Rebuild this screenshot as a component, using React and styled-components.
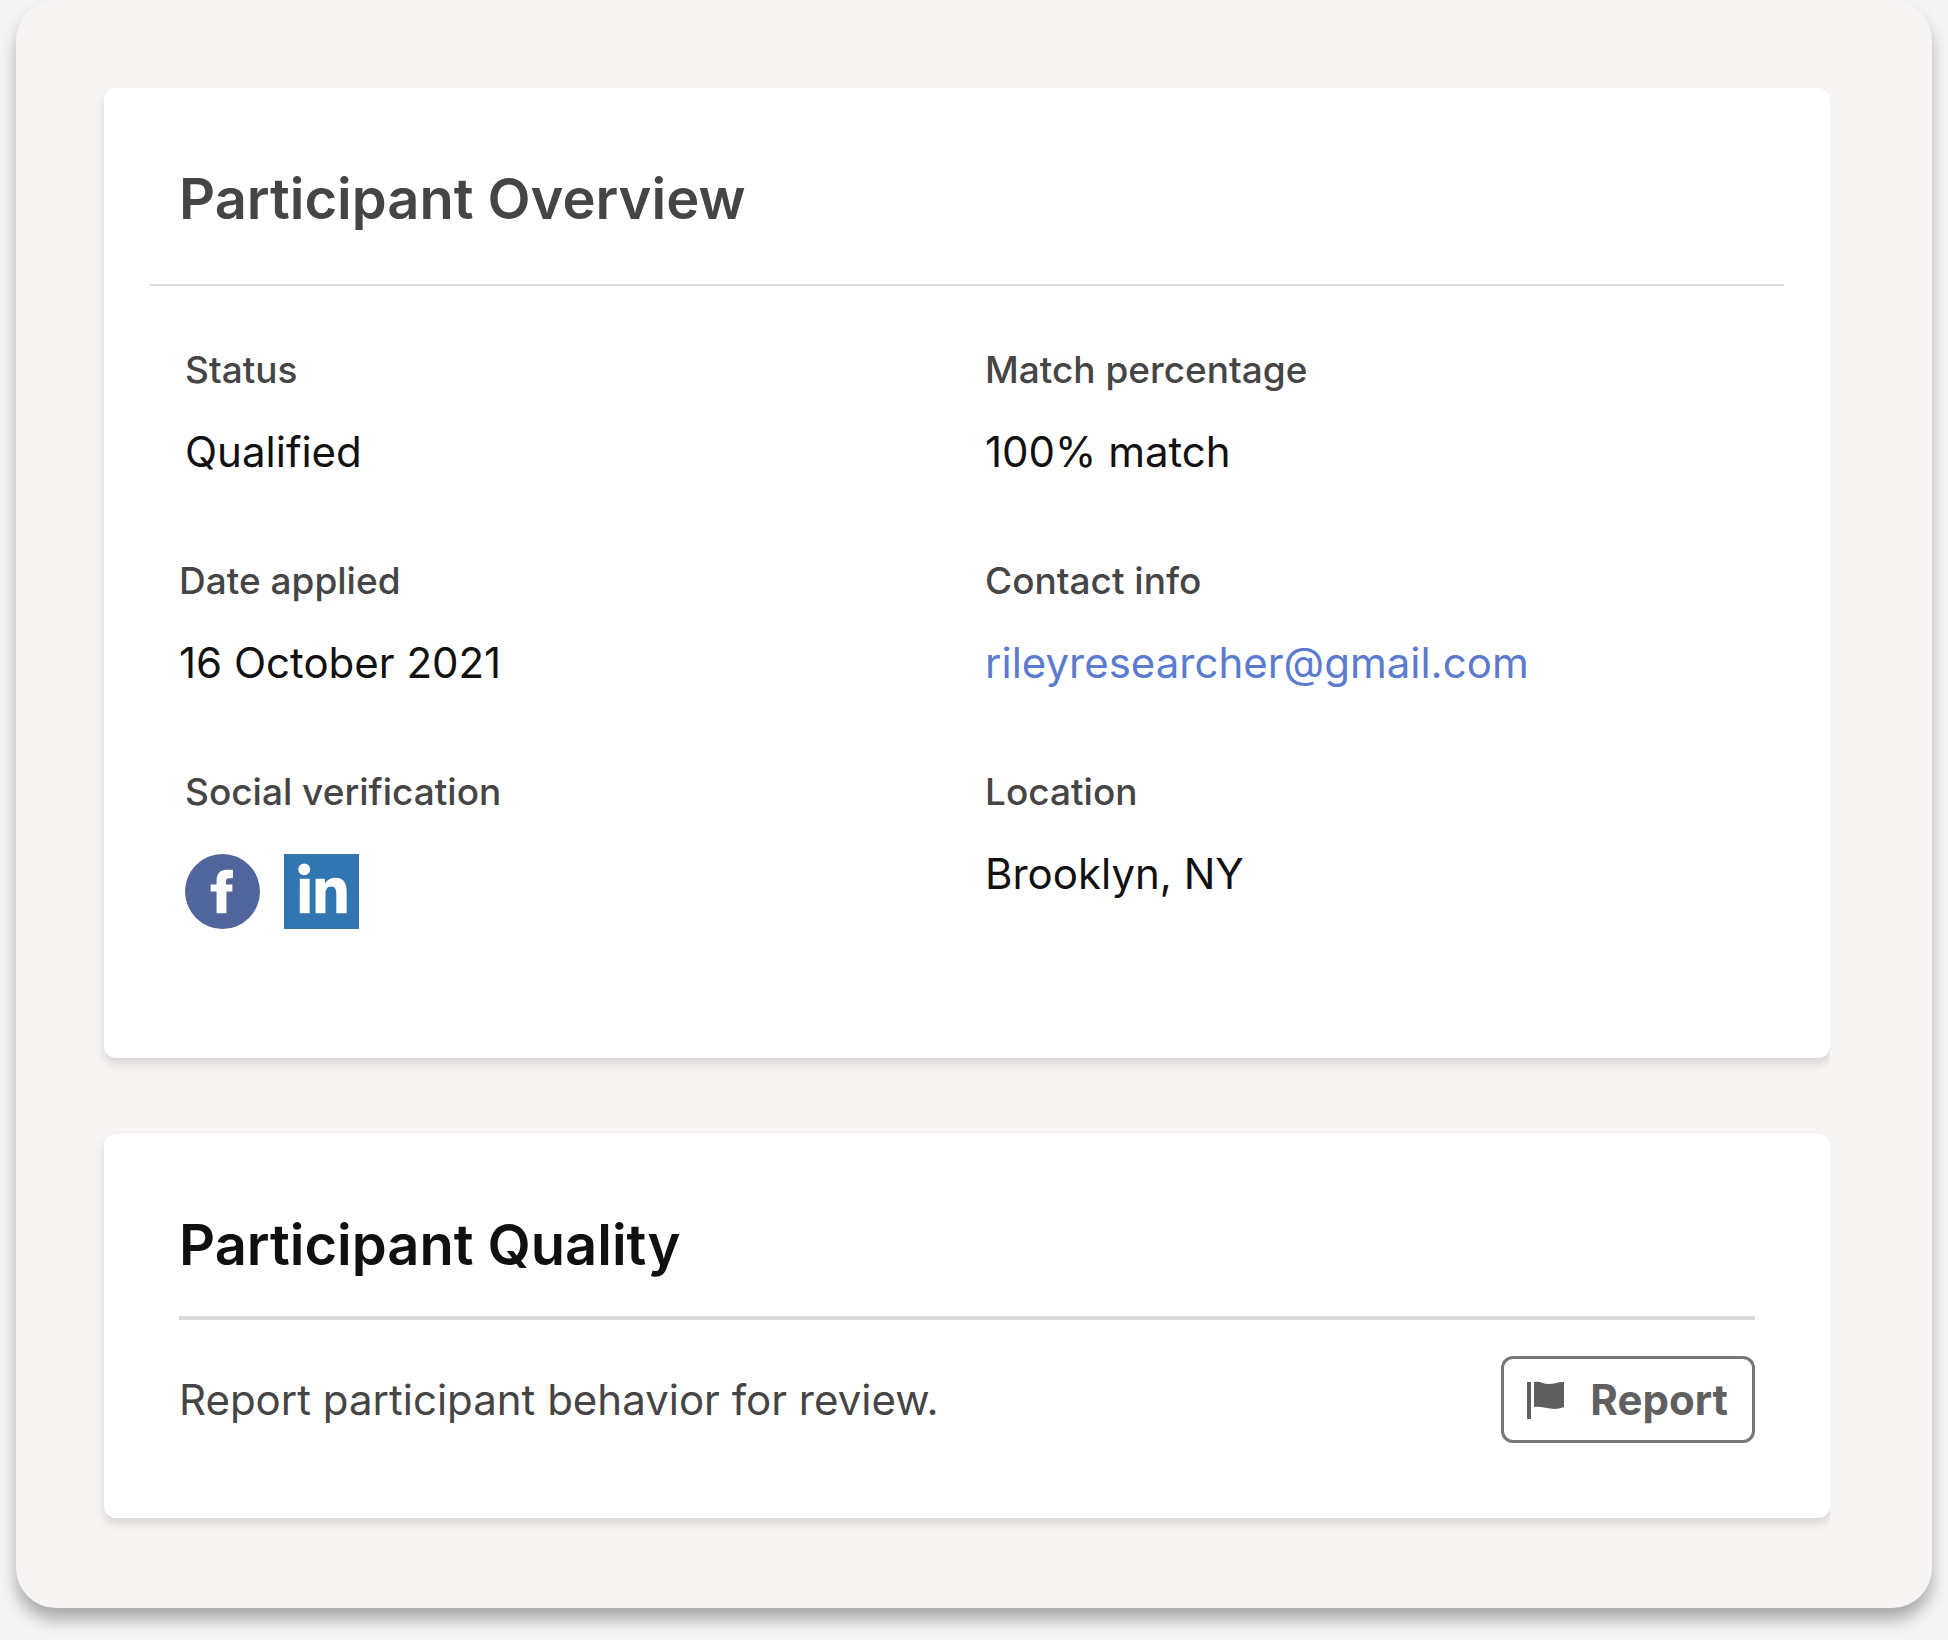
import styled, { createGlobalStyle } from 'styled-components';

const fields = [
    { label: 'Status', value: 'Qualified', inset: true },
    { label: 'Match percentage', value: '100% match' },
    { label: 'Date applied', value: '16 October 2021' },
    { label: 'Contact info', email: 'rileyresearcher@gmail.com' },
    { label: 'Social verification', social: true, inset: true },
    { label: 'Location', value: 'Brooklyn, NY' },
];

function FacebookIcon() {
    return (
        <svg width="75" height="75" viewBox="0 0 76 76" role="img" aria-label="Facebook">
            <circle cx="38" cy="38" r="38" fill="#50659c" />
            <path d="M32 60V38h-6v-7h6v-4c0-7.500 4-11 10-11h6.500v8.500H45c-2.500 0-3.500 1-3.500 3.500v3H48v7h-6v22z" fill="#fff" />
        </svg>
    )
}

function LinkedinIcon() {
    return (
        <svg width="75" height="75" viewBox="0 0 76 76" role="img" aria-label="LinkedIn">
            <rect width="76" height="76" fill="#3175b1" />
            <circle cx="20.500" cy="15.500" r="6" fill="#fff" />
            <path d="M16 25h10v35H16zM32 25h9.500v5c2-3.500 5.500-6 10.500-6 9 0 11.500 6 11.500 14v22H53V40.500c0-4-1-7.500-5-7.500-4.500 0-6 3.500-6 7.500V60H32z" fill="#fff" />
        </svg>
    )
}

function FlagIcon() {
    return (
        <svg width="40" height="40" viewBox="0 0 40 40" aria-hidden="true">
            <path d="M1 2h4v37H1z" fill="#5f5f5f" />
            <path d="M8 2c6-1.500 9 2 15 2s9-2.500 15-2v25c-5 2-9 2.500-14 1.500S13 26 8 27z" fill="#5f5f5f" />
        </svg>
    )
}

function App() {
    return (
        <>
            <GlobalStyle />
            <Panel>
                <OverviewCard>
                    <Title color="#454545">Participant Overview</Title>
                    <Details>
                        {fields.map(field => {
                            return (
                                <Field key={field.label} $inset={field.inset}>
                                    <Label>{field.label}</Label>
                                    {field.value && <Value>{field.value}</Value>}
                                    {field.email && (
                                        <Value><Email href={'mailto:' + field.email}>{field.email}</Email></Value>
                                    )}
                                    {field.social && (
                                        <Socials>
                                            <FacebookIcon />
                                            <LinkedinIcon />
                                        </Socials>
                                    )}
                                </Field>
                            )
                        })}
                    </Details>
                </OverviewCard>
                <QualityCard>
                    <Title color="#101010">Participant Quality</Title>
                    <ReportRow>
                        <ReportText>Report participant behavior for review.</ReportText>
                        <ReportButton type="button">
                            <FlagIcon />
                            Report
                        </ReportButton>
                    </ReportRow>
                </QualityCard>
            </Panel>
        </>
    )
}

export default App;

const GlobalStyle = createGlobalStyle`
    * {
        box-sizing: border-box;
    }

    body {
        margin: 0;
        background: #f5f5f5;
        font-family: Inter, 'Liberation Sans', sans-serif;
    }
`

const Panel = styled.main`
    display: flex;
    flex-direction: column;
    gap: 76px;
    margin: 0 16px 32px;
    padding: 88px 102px 90px 88px;
    border-radius: 40px;
    background: #f7f4f3;
    box-shadow: 0 12px 16px rgba(0, 0, 0, 0.3);
`

const Card = styled.section`
    border-radius: 12px;
    background: #fff;
    box-shadow: 0 6px 10px rgba(0, 0, 0, 0.12);
    clip-path: inset(-20px 0 -20px -20px);
`

const OverviewCard = styled(Card)`
    padding: 75px 46px 129px;
`

const QualityCard = styled(Card)`
    padding: 75px;
`

const Title = styled.h2`
    margin: 0;
    color: ${props => props.color};
    font-size: 56px;
    line-height: 72px;
    font-weight: 600;

    ${OverviewCard} & {
        padding: 0 29px 49px;
        border-bottom: 2px solid #dcdcdc;
    }

    ${QualityCard} & {
        padding-bottom: 35px;
        border-bottom: 4px solid #d9d9d9;
    }
`

const Details = styled.dl`
    display: grid;
    grid-template-columns: 806fr 799fr;
    row-gap: 77px;
    margin: 0;
    padding: 60px 0 0 29px;

    @media (max-width: 1000px) {
        grid-template-columns: 1fr;
    }
`

const Field = styled.div`
    padding-left: ${props => props.$inset ? '6px' : '0'};
`

const Label = styled.dt`
    color: #454545;
    font-size: 37px;
    line-height: 48px;
    font-weight: 500;
`

const Value = styled.dd`
    margin: 30px 0 0;
    color: #111;
    font-size: 42px;
    line-height: 56px;
`

const Socials = styled.dd`
    display: flex;
    gap: 24px;
    margin: 38px 0 0;
`

const Email = styled.a`
    color: #5a7bcf;
    text-decoration: none;
`

const ReportRow = styled.div`
    display: flex;
    align-items: center;
    justify-content: space-between;
    gap: 24px;
    padding-top: 36px;
`

const ReportText = styled.p`
    margin: 0;
    color: #454545;
    font-size: 42px;
    line-height: 56px;
`

const ReportButton = styled.button`
    display: flex;
    align-items: center;
    gap: 24px;
    height: 87px;
    padding: 0 24px 0 22px;
    border: 3px solid #777;
    border-radius: 12px;
    background: #fff;
    color: #5f5f5f;
    font-family: inherit;
    font-size: 42px;
    line-height: 56px;
    font-weight: 700;
    cursor: pointer;
`
